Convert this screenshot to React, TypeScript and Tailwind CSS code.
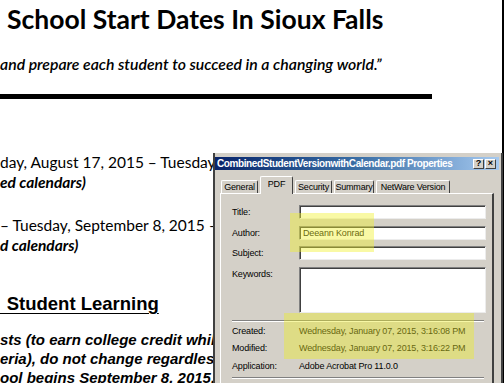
import React from "react";

const lato = { fontFamily: "Lato, 'Open Sans', sans-serif" };
const win = { fontFamily: "'Liberation Sans', Arial, sans-serif" };

function Field({ label, value, tall }: { label: string; value?: string; tall?: boolean }) {
  return (
    <div className="flex items-start">
      <div className="w-[67px] pt-[2px] text-[9px] leading-[11px] tracking-[-0.15px] text-black">{label}</div>
      <div
        className={`w-[187px] bg-white border border-t-[#808080] border-l-[#808080] border-r-[#ececec] border-b-[#ececec] shadow-[inset_1px_1px_0_#404040] pl-[3px] pt-[1px] text-[9px] leading-[11px] tracking-[-0.15px] ${tall ? "h-[46px]" : "h-[14px]"}`}
      >
        {value}
      </div>
    </div>
  );
}

function InfoRow({ label, value }: { label: string; value: string }) {
  return (
    <div className="flex items-center h-[17.5px] text-[9px] tracking-[-0.15px] text-black">
      <div className="w-[67px]">{label}</div>
      <div>{value}</div>
    </div>
  );
}

function Tab({ label, width, active }: { label: string; width: string; active?: boolean }) {
  return (
    <div
      className={`${width} border-t border-l border-white border-r-[1.5px] border-r-[#404040] rounded-t-[2px] text-center text-[9px] leading-[11px] tracking-[-0.2px] text-black bg-[#d4d0c8] ${
        active ? "h-[18px] pt-[2px] -mb-[1px] relative z-10" : "h-[13px] mt-[4px] pt-[1px]"
      }`}
    >
      {label}
    </div>
  );
}

export default function App() {
  return (
    <div className="relative w-[504px] h-[383px] overflow-hidden bg-white">
      {/* document page */}
      <div className="w-[504px] h-[383px] border-r-2 border-black text-black">
        <h1 className="pl-[7px] pt-[4px] text-[26.5px] leading-[30px] font-bold whitespace-nowrap" style={lato}>
          School Start Dates In Sioux Falls
        </h1>
        <p className="mt-[21px] text-[15.8px] leading-[18px] font-semibold italic whitespace-nowrap" style={lato}>
          and prepare each student to succeed in a changing world.”
        </p>
        <div className="mt-[21px] w-[432px] h-[5px] bg-black" />

        <div className="mt-[53px] text-[15.5px] leading-[20px] whitespace-nowrap" style={lato}>
          <div>day, August 17, 2015 – Tuesday, May 24, 2016</div>
          <div className="font-bold italic">ed calendars)</div>
          <div className="mt-[23px]">– Tuesday, September 8, 2015 – Thursday, June 2, 2016</div>
          <div className="font-bold italic">d calendars)</div>
        </div>

        <div
          className="mt-[39px] w-[157px] text-[18.5px] leading-[20px] font-bold underline underline-offset-[3px] whitespace-nowrap"
          style={win}
        >
          {"\u00a0\u200aStudent Learning"}
        </div>
        <div className="mt-[16px] text-[15px] leading-[19px] font-bold italic whitespace-nowrap" style={win}>
          <div>sts (to earn college credit while in high school)</div>
          <div>eria), do not change regardless of the</div>
          <div>ool begins September 8, 2015.</div>
        </div>
      </div>

      {/* properties dialog */}
      <div
        className="absolute left-[213px] top-[153px] w-[290px] h-[240px] bg-[#d4d0c8] border-l-2 border-l-[#404040] border-r-2 border-r-[#404040] pt-[4px] pr-[2px]"
        style={win}
      >
        <div className="flex items-center justify-between h-[13px] pl-[2px] pr-[3px] bg-gradient-to-r from-[#0a246a] via-[#3a6ea5] to-[#a6caf0]">
          <span className="text-white text-[10px] font-bold tracking-[-0.4px] leading-none whitespace-nowrap">
            CombinedStudentVersionwithCalendar.pdf Properties
          </span>
          <div className="flex gap-[1px]">
            <div className="w-[11px] h-[10px] bg-[#d4d0c8] border border-t-white border-l-white border-r-[#404040] border-b-[#404040] flex items-center justify-center text-[9px] font-bold leading-none">
              ?
            </div>
            <div className="w-[11px] h-[10px] bg-[#d4d0c8] border border-t-white border-l-white border-r-[#404040] border-b-[#404040] flex items-center justify-center text-[9px] font-bold leading-none">
              ×
            </div>
          </div>
        </div>

        <div className="pl-[5px] pr-[5px] pt-[6px]">
          <div className="flex items-end gap-[2px] pl-[1px]">
            <Tab label="General" width="w-[37px]" />
            <Tab label="PDF" width="w-[33px]" active />
            <Tab label="Security" width="w-[37px]" />
            <Tab label="Summary" width="w-[40px]" />
            <Tab label="NetWare Version" width="w-[74px]" />
          </div>
          <div className="h-[200px] border-t border-l border-white border-r-2 border-r-[#404040] pl-[11px] pt-[11px]">
            <div className="flex flex-col gap-[6.5px]">
              <Field label="Title:" />
              <Field label="Author:" value="Deeann Konrad" />
              <Field label="Subject:" />
              <Field label="Keywords:" tall />
            </div>
            <div className="mt-[7px] w-[252px] border-t border-t-[#808080] border-b border-b-white" />
            <div className="mt-[1px]">
              <InfoRow label="Created:" value="Wednesday, January 07, 2015, 3:16:08 PM" />
              <InfoRow label="Modified:" value="Wednesday, January 07, 2015, 3:16:22 PM" />
              <InfoRow label="Application:" value="Adobe Acrobat Pro 11.0.0" />
            </div>
            <div className="mt-[2px] w-[252px] border-t border-t-[#808080] border-b border-b-white" />
          </div>
        </div>

        {/* highlighter marks */}
        <div className="absolute left-[75px] top-[60px] w-[84px] h-[39px] bg-[rgba(240,240,40,0.42)] blur-[0.5px]" />
        <div className="absolute left-[69px] top-[160px] w-[190px] h-[46px] bg-[rgba(235,235,40,0.42)] blur-[0.5px]" />
      </div>
    </div>
  );
}
